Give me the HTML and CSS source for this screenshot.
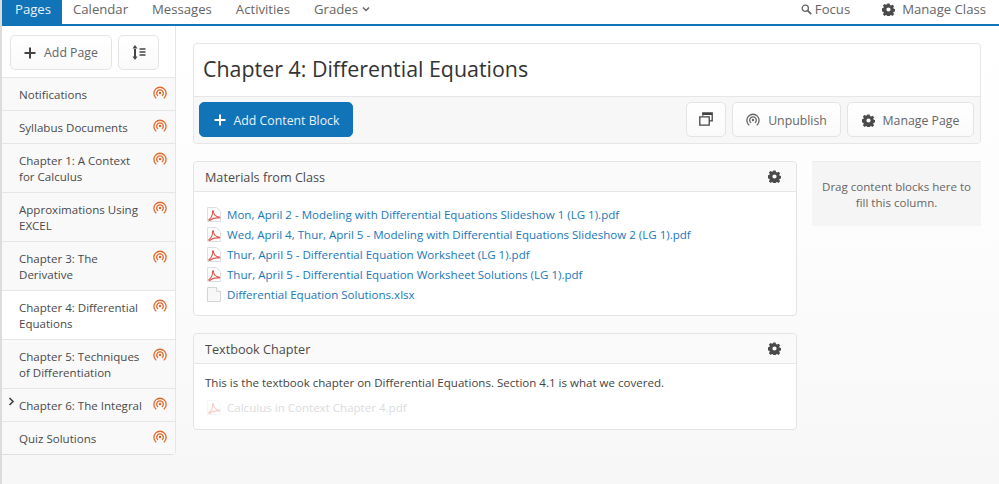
FILE: index.html
```html
<!DOCTYPE html>
<html lang="en">
<head>
<meta charset="utf-8">
<title>Chapter 4: Differential Equations</title>
<link rel="stylesheet" href="styles.css">
</head>
<body>
<svg class="defs" width="0" height="0" aria-hidden="true">
  <defs>
    <symbol id="gear" viewBox="0 0 16 16"><path fill="currentColor" fill-rule="evenodd" d="M6.6 0.6h2.8l.4 2 1.3.6 1.8-1.1 2 2-1.1 1.8.6 1.3 2 .4v2.8l-2 .4-.6 1.3 1.1 1.8-2 2-1.8-1.1-1.3.6-.4 2H6.6l-.4-2-1.3-.6-1.800 1.100-2-2 1.100-1.800-.6-1.300-2-.4V6.600l2-.4.6-1.300-1.100-1.800 2-2 1.800 1.100 1.300-.6zM8 5.400a2.600 2.600 0 1 0 0 5.200a2.600 2.600 0 0 0 0-5.200z"/></symbol>
    <symbol id="cast" viewBox="0 0 16 16"><g fill="none" stroke="currentColor" stroke-width="1.500" stroke-linecap="round"><path d="M3.300 13.600a7 7 0 1 1 9.400 0"/><path d="M5.400 11a3.800 3.800 0 1 1 5.200 0"/></g><circle cx="8" cy="8" r="1.400" fill="currentColor"/></symbol>
    <symbol id="pdf" viewBox="0 0 14 15"><path d="M.5.500h9l4 4v10H.5z" fill="#fff" stroke="#dcdfe2"/><path d="M2 12.500c2-1 4-5 3.500-8 0-1 1-1 1 0 0 3 2.500 5.500 5.500 5.500 1 0 1 1 0 1-3-.3-6.500.300-8.500 2-1 .8-2 .2-1.500-.5z" fill="none" stroke="#dd5a50" stroke-width="1.100"/></symbol>
    <symbol id="file" viewBox="0 0 14 15"><path d="M.5.500h9l4 4v10H.5z" fill="#f7f7f7" stroke="#d5d5d5"/><path d="M9.500.500v4h4" fill="#fff" stroke="#d5d5d5"/></symbol>
  </defs>
</svg>
<header class="topnav">
  <nav class="tabs">
    <a class="tab active">Pages</a>
    <a class="tab">Calendar</a>
    <a class="tab">Messages</a>
    <a class="tab">Activities</a>
    <a class="tab">Grades <svg class="caret" width="8" height="6" viewBox="0 0 8 6"><path d="M1 1.500l3 3 3-3" fill="none" stroke="currentColor" stroke-width="1.500"/></svg></a>
  </nav>
  <div class="tools">
    <a class="tool"><svg class="search" width="11" height="11" viewBox="0 0 11 11"><circle cx="4.300" cy="4.300" r="3.100" fill="none" stroke="currentColor" stroke-width="1.300"/><path d="M6.700 6.700l3.500 3.500" stroke="currentColor" stroke-width="1.700"/></svg>Focus</a>
    <a class="tool tool-manage"><svg class="gear-lg"><use href="#gear"/></svg>Manage Class</a>
  </div>
</header>
<div class="shell">
  <aside class="sidebar">
    <div class="side-actions">
      <button class="btn add-page"><svg class="plus" width="12" height="12" viewBox="0 0 12 12"><path d="M6 .5v11M.5 6h11" stroke="currentColor" stroke-width="2"/></svg>Add Page</button>
      <button class="btn sort" aria-label="Sort"><svg width="14" height="15" viewBox="0 0 14 15"><path d="M3 0L.5 3.500h5zM3 15L.5 11.500h5zM2 3h2v9H2z" fill="#444"/><path d="M7.500 4h6M7.500 7h6M7.500 10h6" stroke="#444" stroke-width="1.300"/></svg></button>
    </div>
    <ul class="pages">
      <li class="page"><span>Notifications</span><svg class="cast"><use href="#cast"/></svg></li>
      <li class="page"><span>Syllabus Documents</span><svg class="cast"><use href="#cast"/></svg></li>
      <li class="page two"><span>Chapter 1: A Context for Calculus</span><svg class="cast"><use href="#cast"/></svg></li>
      <li class="page two"><span>Approximations Using EXCEL</span><svg class="cast"><use href="#cast"/></svg></li>
      <li class="page two"><span>Chapter 3: The Derivative</span><svg class="cast"><use href="#cast"/></svg></li>
      <li class="page two current"><span>Chapter 4: Differential Equations</span><svg class="cast"><use href="#cast"/></svg></li>
      <li class="page two"><span>Chapter 5: Techniques of Differentiation</span><svg class="cast"><use href="#cast"/></svg></li>
      <li class="page nested"><svg class="chev" width="7" height="9" viewBox="0 0 7 9"><path d="M1.500 1l3.500 3.500L1.500 8" fill="none" stroke="#444" stroke-width="1.700"/></svg><span>Chapter 6: The Integral</span><svg class="cast"><use href="#cast"/></svg></li>
      <li class="page last"><span>Quiz Solutions</span><svg class="cast"><use href="#cast"/></svg></li>
    </ul>
  </aside>
  <main class="content">
    <section class="title-card">
      <h1>Chapter 4: Differential Equations</h1>
      <div class="title-bar">
        <button class="btn primary"><svg class="plus" width="12" height="12" viewBox="0 0 12 12"><path d="M6 .5v11M.5 6h11" stroke="currentColor" stroke-width="2"/></svg>Add Content Block</button>
        <div class="bar-right">
          <button class="btn copy" aria-label="Copy"><svg width="14" height="14" viewBox="0 0 14 14"><path d="M3.800 3.800V.8h9.400v8h-3" fill="none" stroke="#444" stroke-width="1.300"/><path d="M3.800 2h9.400" stroke="#444" stroke-width="2"/><path d="M.8 4.800h9.400v8.400H.8z" fill="none" stroke="#444" stroke-width="1.300"/></svg></button>
          <button class="btn publish"><svg class="cast grey"><use href="#cast"/></svg>Unpublish</button>
          <button class="btn manage"><svg class="gear-lg"><use href="#gear"/></svg>Manage Page</button>
        </div>
      </div>
    </section>
    <div class="columns">
      <div class="col-main">
        <section class="block">
          <header class="block-head"><h2>Materials from Class</h2><svg class="gear-lg"><use href="#gear"/></svg></header>
          <div class="block-body">
            <ul class="files">
              <li><svg class="ficon"><use href="#pdf"/></svg><a>Mon, April 2 - Modeling with Differential Equations Slideshow 1 (LG 1).pdf</a></li>
              <li><svg class="ficon"><use href="#pdf"/></svg><a>Wed, April 4, Thur, April 5 - Modeling with Differential Equations Slideshow 2 (LG 1).pdf</a></li>
              <li><svg class="ficon"><use href="#pdf"/></svg><a>Thur, April 5 - Differential Equation Worksheet (LG 1).pdf</a></li>
              <li><svg class="ficon"><use href="#pdf"/></svg><a>Thur, April 5 - Differential Equation Worksheet Solutions (LG 1).pdf</a></li>
              <li><svg class="ficon"><use href="#file"/></svg><a>Differential Equation Solutions.xlsx</a></li>
            </ul>
          </div>
        </section>
        <section class="block">
          <header class="block-head"><h2>Textbook Chapter</h2><svg class="gear-lg"><use href="#gear"/></svg></header>
          <div class="block-body text-body">
            <p>This is the textbook chapter on Differential Equations. Section 4.1 is what we covered.</p>
            <ul class="files faded">
              <li><svg class="ficon"><use href="#pdf"/></svg><a>Calculus in Context Chapter 4.pdf</a></li>
            </ul>
          </div>
        </section>
      </div>
      <aside class="col-side">Drag content blocks here to fill this column.</aside>
    </div>
  </main>
</div>
</body>
</html>
```

FILE: styles.css
```css
* { box-sizing: border-box; }
html, body { margin: 0; height: 100%; }
body {
  font-family: "Open Sans", sans-serif;
  font-size: 11.55px;
  color: #4a4a4a;
  background: linear-gradient(#ffffff 0, #fdfdfd 200px, #f7f7f7 484px);
  overflow: hidden;
  border-left: 2px solid #dcdcdc;
  width: 999px;
  height: 484px;
}
.defs { position: absolute; }
.topnav {
  display: flex;
  justify-content: space-between;
  height: 26px;
  border-bottom: 2px solid #1173b8;
  background: #fff;
}
.tabs { display: flex; }
.tab {
  display: flex;
  align-items: center;
  gap: 4px;
  height: 24px;
  padding: 0 12px 6px;
  font-size: 13.15px;
  color: #666;
}
.tab.active { width: 60px; background: #1173b8; color: #e8f2f9; padding: 0 0 6px 13px; margin-right: -1px; }
.tools { display: flex; padding-right: 13px; gap: 32px; }
.tool { display: flex; align-items: center; height: 24px; padding-bottom: 6px; font-size: 13.15px; color: #666; }
.search { margin-right: 3px; }
.tool .gear-lg { margin-right: 7px; }
.gear-lg { width: 13px; height: 13px; color: #4a4a4a; flex: none; }
.shell { display: flex; align-items: flex-start; }
.sidebar {
  width: 174px;
  flex: none;
  border-right: 1px solid #e6e6e6;
  border-bottom: 1px solid #e0e0e0;
  border-bottom-right-radius: 4px;
}
.side-actions {
  display: flex;
  gap: 6px;
  padding: 9px 0 0 8px;
  height: 51px;
  background: #fff;
}
.btn {
  display: inline-flex;
  align-items: center;
  justify-content: center;
  height: 35px;
  padding: 0 14px;
  border: 1px solid #e4e4e4;
  border-radius: 5px;
  background: linear-gradient(#ffffff, #fafafa);
  font-family: inherit;
  font-size: 12.3px;
  color: #666;
}
.add-page { width: 102px; padding: 0; }
.add-page .plus { margin-right: 8px; color: #444; }
.sort { width: 41px; padding: 0; }
.pages { list-style: none; margin: 0; padding: 0; }
.page {
  position: relative;
  display: flex;
  justify-content: space-between;
  align-items: flex-start;
  height: 33px;
  padding: 8.500px 8px 0 17px;
  border-top: 1px solid #e6e6e6;
  background: #f9f9f9;
  line-height: 16px;
  color: #4a4a4a;
}
.page.two { height: 49px; }
.page.current { background: #fff; }
.page span { width: 122px; }
.page.nested span { white-space: nowrap; }
.chev { position: absolute; left: 6px; top: 8px; }
.cast { width: 14px; height: 14px; color: #e2682c; flex: none; margin-top: -1px; }
.cast.grey { color: #666; margin: 0 8px 0 0; }
.content { flex: 1; padding: 17px 18px 0 17px; min-width: 0; }
.title-card {
  border: 1px solid #e6e6e6;
  border-radius: 4px;
  background: #fff;
}
h1 {
  margin: 0;
  height: 52px;
  padding-left: 9px;
  font-size: 21.4px;
  font-weight: 400;
  line-height: 50px;
  color: #333;
}
.title-bar {
  display: flex;
  justify-content: space-between;
  height: 47px;
  padding: 5px 6px 0 5px;
  border-top: 1px solid #e6e6e6;
  background: #f7f7f7;
  border-radius: 0 0 4px 4px;
}
.btn.primary {
  width: 154px;
  padding: 0 0 0 1px;
  background: #1173b8;
  border-color: #1173b8;
  color: #e8f2f9;
}
.primary .plus { margin-right: 8px; color: #fff; }
.bar-right { display: flex; gap: 6px; }
.title-bar .btn { align-items: center; padding-top: 1px; }
.bar-right .copy { width: 40px; padding: 0 0 2px; }
.bar-right .publish { width: 109px; }
.bar-right .manage { width: 127px; }
.bar-right .publish, .bar-right .manage { padding-left: 0; padding-right: 0; }
.bar-right .gear-lg { margin-right: 8px; }
.columns { display: flex; gap: 15px; margin-top: 17px; align-items: flex-start; }
.col-main { width: 604px; flex: none; display: flex; flex-direction: column; gap: 17px; }
.block {
  border: 1px solid #e4e4e4;
  border-radius: 4px;
  background: #fff;
}
.block-head {
  display: flex;
  justify-content: space-between;
  align-items: center;
  height: 30px;
  padding: 0 15px 0 11px;
  border-bottom: 1px solid #e6e6e6;
  background: #fafafa;
  border-radius: 4px 4px 0 0;
}
h2 { margin: 0; font-size: 12.65px; font-weight: 400; color: #4a4a4a; }
.block-body { padding: 12px 13px 11px; }
.files { list-style: none; margin: 0; padding: 0; }
.files li { display: flex; align-items: center; height: 20px; }
.files a { color: #1a77ba; white-space: nowrap; }
.ficon { width: 14px; height: 15px; margin-right: 6px; flex: none; }
.text-body { padding: 10px 11px 12px; }
.text-body p { margin: 0 0 5px; line-height: 18px; color: #444; }
.faded { padding-left: 2px; }
.faded .ficon { opacity: 0.3; }
.faded a { color: #dcdcdc; }
.col-side {
  width: 169px;
  height: 65px;
  padding: 17px 8px 0;
  background: #f5f5f5;
  border-top: 1px solid #ececec;
  text-align: center;
  line-height: 16px;
  color: #666;
}
```
